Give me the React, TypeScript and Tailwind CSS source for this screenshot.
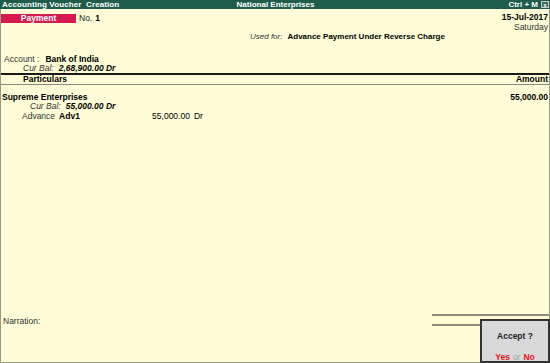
import React from "react";

export default function App() {
  return (
    <div className="relative w-[550px] h-[363px] overflow-hidden bg-[#fefdd7] text-black flex flex-col" style={{ fontFamily: '"Liberation Sans", Arial, sans-serif' }}>
      {/* Title bar */}
      <div className="h-[9px] bg-[#1f5c4c] text-white font-bold text-[8px] leading-[9px] flex items-center pl-[2px] pr-[1px]">
        <div className="flex-1 whitespace-pre tracking-[0.1px]">Accounting Voucher  Creation</div>
        <div className="flex-1 text-center">National Enterprises</div>
        <div className="flex-1 flex justify-end items-center gap-[3px]">
          <span>Ctrl + M</span>
          <span className="w-[8px] h-[7px] border border-[#c8c8c8] bg-[#3d6d60] flex items-center justify-center text-[6px] leading-none text-white">x</span>
        </div>
      </div>
      {/* Body */}
      <div className="flex-1 flex flex-col border-x border-b border-[#9a9a8c]">
        <div className="flex justify-between pt-[3px] pr-[1px]">
          <div className="flex items-center h-[10px] mt-[1px]">
            <div className="w-[75px] h-[9px] bg-[#d41a4e] text-white font-bold text-[8.5px] leading-[9px] text-center">Payment</div>
            <span className="ml-[3px] text-[8.5px] text-[#222]">No.</span>
            <span className="ml-[3px] text-[8.5px] font-bold">1</span>
          </div>
          <div className="flex flex-col items-end text-[8.5px] leading-[9px]">
            <span className="font-bold mt-[1px]">15-Jul-2017</span>
            <span className="text-[#333] mt-[1px]">Saturday</span>
          </div>
        </div>
        <div className="flex pl-[249px] h-[10px] items-center text-[8px]">
          <span className="italic text-[#333]">Used for:</span>
          <span className="ml-[5px] font-bold">Advance Payment Under Reverse Charge</span>
        </div>
        <div className="mt-[12px] pl-[3px] h-[10px] flex items-center text-[8.5px]">
          <span className="text-[#333]">Account :</span>
          <span className="ml-[6px] font-bold">Bank of India</span>
        </div>
        <div className="pl-[22px] h-[9px] flex items-center text-[8.5px] italic">
          <span className="text-[#333]">Cur Bal:</span>
          <span className="ml-[5px] font-bold">2,68,900.00 Dr</span>
        </div>
        {/* Header */}
        <div className="h-[12px] border-t-2 border-b border-t-[#1a1a1a] border-b-[#8a8a80] flex items-center justify-between pl-[22px] pr-[1px] text-[8.5px] font-bold">
          <span>Particulars</span>
          <span>Amount</span>
        </div>
        {/* Entry */}
        <div className="mt-[7px] h-[10px] flex items-center justify-between pl-[1px] pr-[1px] text-[8.5px] font-bold">
          <span>Supreme Enterprises</span>
          <span>55,000.00</span>
        </div>
        <div className="pl-[29px] h-[9px] flex items-center text-[8.5px] italic">
          <span className="text-[#333]">Cur Bal:</span>
          <span className="ml-[5px] font-bold">55,000.00 Dr</span>
        </div>
        <div className="pl-[21px] h-[10px] flex items-center text-[8.5px]">
          <span className="text-[#333]">Advance</span>
          <span className="ml-[4px] font-bold w-[93px]">Adv1</span>
          <span>55,000.00</span>
          <span className="ml-[4px]">Dr</span>
        </div>
        <div className="flex-1" />
        {/* Bottom */}
        <div className="flex items-start h-[48px]">
          <div className="flex-1 pl-[2px] pt-[1px] text-[8.5px] leading-[12px] text-[#333]">Narration:</div>
          <div className="w-[117px] flex flex-col">
            <div className="h-[2px] bg-[#8c8c78]" />
            <div className="h-[8px] text-right pr-[1px] text-[8.5px] font-bold leading-[12px] overflow-hidden">55,000.00</div>
            <div className="h-[2px] bg-[#8c8c78]" />
          </div>
        </div>
      </div>
      {/* Accept dialog */}
      <div className="absolute left-[480px] top-[319px] w-[70px] h-[44px] bg-[#d9d9d9] border-2 border-[#333] flex flex-col items-center">
        <div className="mt-[10px] text-[8.5px] leading-[10px] font-bold text-[#222]">Accept ?</div>
        <div className="mt-[11px] text-[8.5px] leading-[10px] font-bold flex gap-[3px]">
          <span className="text-[#e8141c]">Yes</span>
          <span className="text-[#a0a0a0] font-normal">or</span>
          <span className="text-[#e8141c]">No</span>
        </div>
      </div>
    </div>
  );
}
